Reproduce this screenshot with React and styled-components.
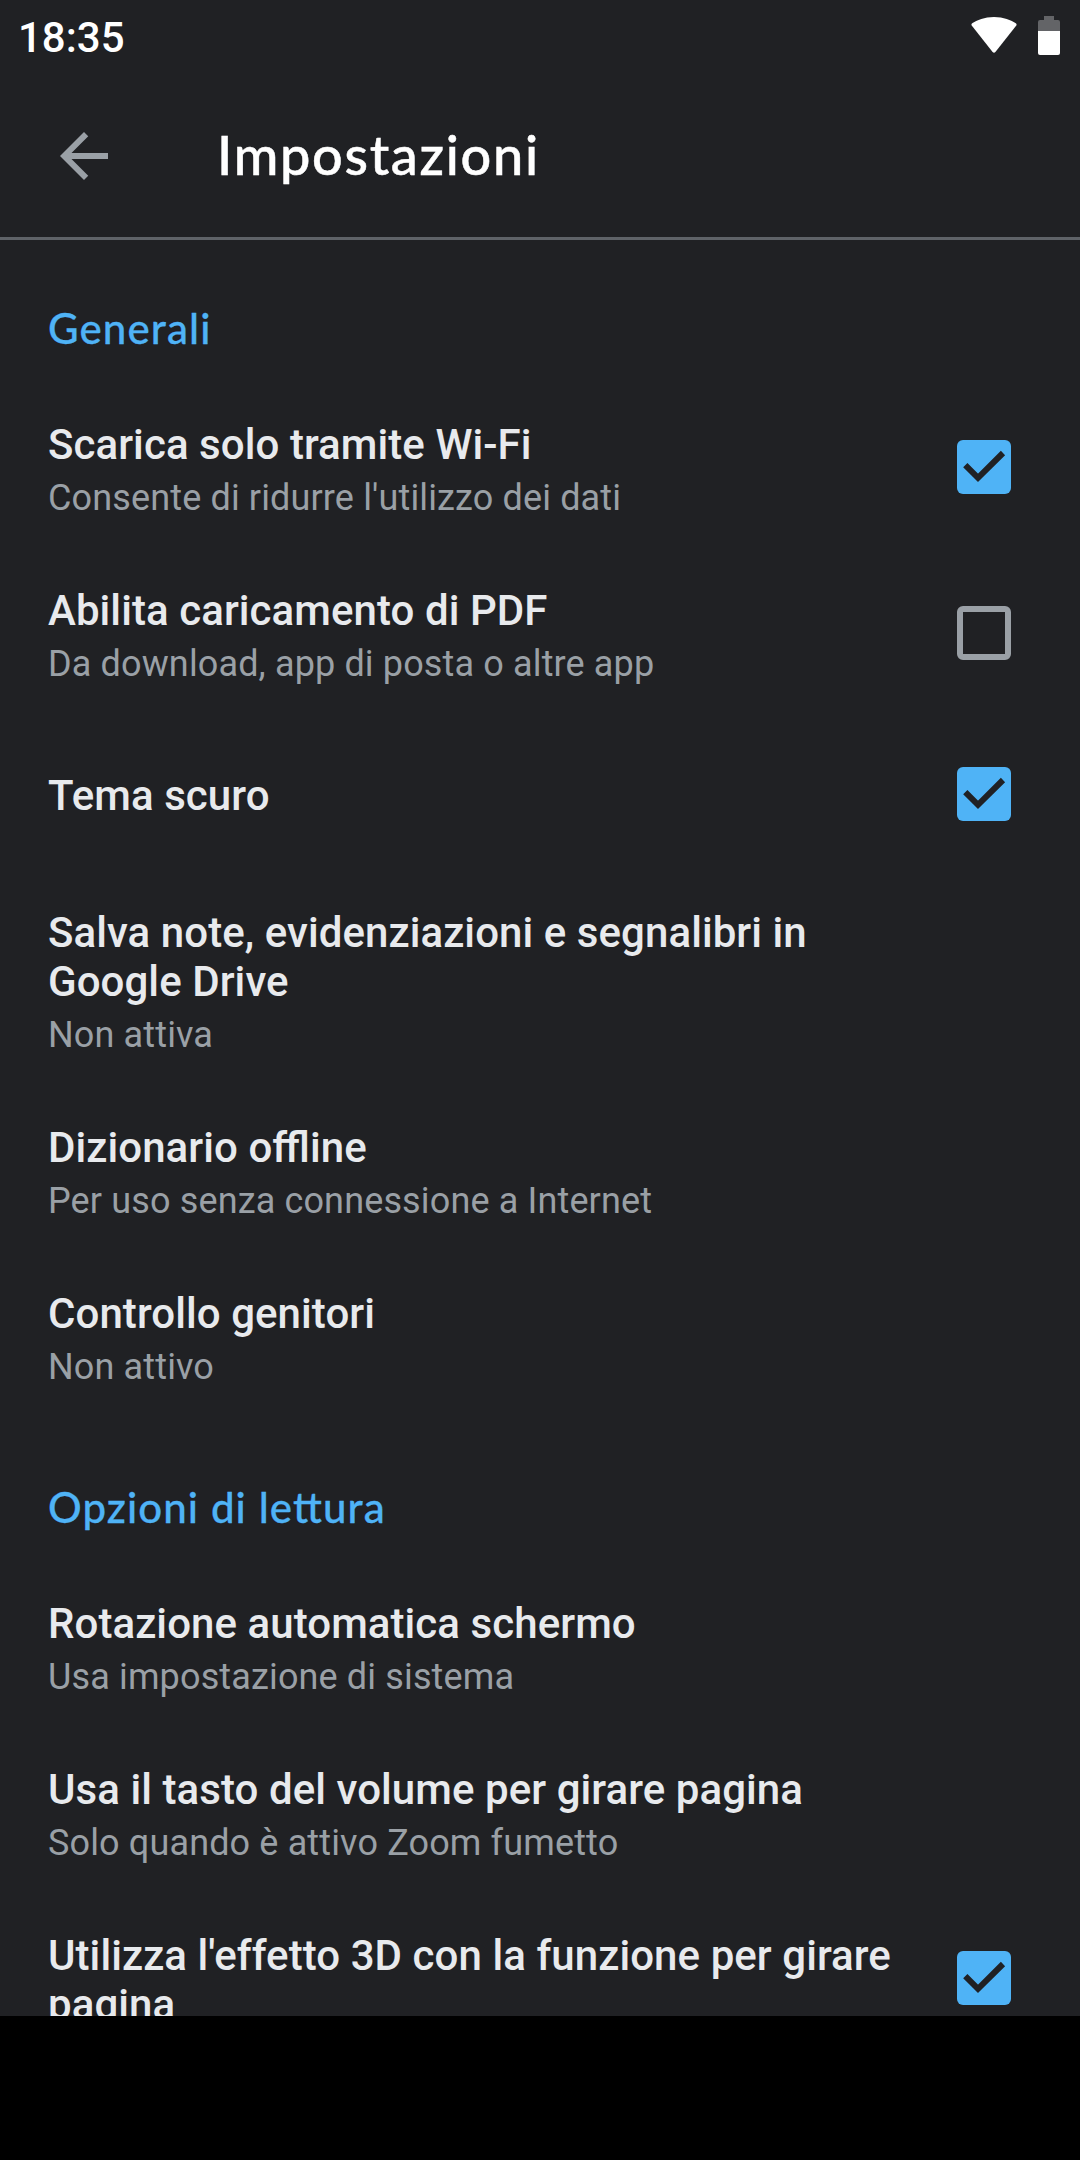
import React, { useState } from "react";
import styled, { createGlobalStyle, ThemeProvider } from "styled-components";

const theme = {
  background: "#202124",
  title: "#e8eaed",
  muted: "#9aa0a6",
  accent: "#4fb3f6",
  divider: "#5f6368"
};

const GlobalStyle = createGlobalStyle`
  html, body {
    margin: 0;
    padding: 0;
    background: #000;
  }
  body {
    font-family: Roboto, "Noto Sans", sans-serif;
    font-feature-settings: "liga" 1;
    overflow: hidden;
  }
`;

const Screen = styled.div`
  display: flex;
  flex-direction: column;
  width: 1080px;
  height: 2016px;
  overflow: hidden;
  background: ${props => props.theme.background};
`;

const StatusBar = styled.div`
  flex: none;
  display: flex;
  align-items: flex-start;
  justify-content: space-between;
  box-sizing: border-box;
  height: 72px;
  padding: 13px 20px 0 18px;
`;

const Clock = styled.time`
  color: #fff;
  font-size: 42px;
  font-weight: 500;
  line-height: 50px;
`;

const StatusIcons = styled.div`
  display: flex;
  gap: 21px;
  padding-top: 3px;
`;

const AppBar = styled.header`
  flex: none;
  display: flex;
  align-items: center;
  box-sizing: border-box;
  height: 168px;
  padding: 0 48px;
  border-bottom: 3px solid ${props => props.theme.divider};
`;

const BackButton = styled.button`
  display: flex;
  width: 72px;
  height: 72px;
  margin: 3px 97px 0 0;
  padding: 0;
  border: 0;
  background: none;
  color: ${props => props.theme.muted};
`;

const PageTitle = styled.h1`
  margin: 0;
  color: #fff;
  font-family: Lato, sans-serif;
  font-size: 54px;
  font-weight: 500;
  letter-spacing: 1.7px;
  line-height: 64px;
  -webkit-text-stroke: 0.5px currentColor;
`;

const Settings = styled.main`
  flex: 1;
  min-height: 0;
  padding-top: 2px;
  overflow: hidden;
`;

const SectionTitle = styled.h2`
  box-sizing: border-box;
  height: 144px;
  margin: 0;
  padding: 61px 48px 0;
  color: ${props => props.theme.accent};
  font-family: Lato, sans-serif;
  font-size: 42px;
  font-weight: 500;
  letter-spacing: 1.1px;
  line-height: 50px;
  -webkit-text-stroke: 0.3px currentColor;
`;

const Row = styled.div`
  display: flex;
  align-items: center;
  justify-content: space-between;
  box-sizing: border-box;
  min-height: 156px;
  padding: 34px 69px 33px 48px;
`;

const RowText = styled.div`
  width: 849px;
  min-height: 51px;
`;

const RowTitle = styled.div`
  color: ${props => props.theme.title};
  font-size: 42px;
  font-weight: 500;
  letter-spacing: 0.07px;
  line-height: 49px;
`;

const RowSummary = styled.div`
  margin-top: 8px;
  color: ${props => props.theme.muted};
  font-size: 36px;
  letter-spacing: 0.14px;
  line-height: 42px;
`;

const Box = styled.button`
  flex: none;
  display: flex;
  box-sizing: border-box;
  width: 54px;
  height: 54px;
  margin: 0 0 5px;
  padding: 0;
  border: ${props =>
    props.$checked ? "0" : `6px solid ${props.theme.muted}`};
  border-radius: 6px;
  background: ${props => (props.$checked ? props.theme.accent : "none")};
`;

const BackIcon = () => (
  <svg width="72" height="72" viewBox="0 0 24 24">
    <path
      d="M20 11H7.830l5.590-5.590L12 4l-8 8 8 8 1.410-1.410L7.830 13H20v-2z"
      fill="currentColor"
    />
  </svg>
);

const WifiIcon = () => (
  <svg width="46" height="39" viewBox="0 0 46 39">
    <path
      d="M23 1C13.500 1 6 4 .9 7.600Q0 8.500.7 9.500L21.600 36q1.400 1.500 2.800 0L45.300 9.500q.7-1-.2-1.900C40 4 32.500 1 23 1z"
      fill="#fff"
    />
  </svg>
);

const BatteryIcon = () => (
  <svg width="22" height="39" viewBox="0 0 22 39">
    <path
      d="M6 0h10v4h4q2 0 2 2v9H0V6q0-2 2-2h4z"
      fill="#636467"
    />
    <path d="M0 15h22v22q0 2-2 2H2q-2 0-2-2z" fill="#fff" />
  </svg>
);

const CheckIcon = () => (
  <svg width="54" height="54" viewBox="0 0 54 54">
    <path
      d="M8.300 25.100L21 37.800 46 13"
      fill="none"
      stroke="#202124"
      strokeWidth="6"
    />
  </svg>
);

const Checkbox = ({ label, initial }) => {
  const [checked, setChecked] = useState(initial);
  return (
    <Box
      role="checkbox"
      aria-checked={checked}
      aria-label={label}
      $checked={checked}
      onClick={() => setChecked(!checked)}
    >
      {checked && <CheckIcon />}
    </Box>
  );
};

const sections = [
  {
    title: "Generali",
    rows: [
      {
        title: "Scarica solo tramite Wi-Fi",
        summary: "Consente di ridurre l'utilizzo dei dati",
        checked: true
      },
      {
        title: "Abilita caricamento di PDF",
        summary: "Da download, app di posta o altre app",
        checked: false
      },
      { title: "Tema scuro", checked: true },
      {
        title: "Salva note, evidenziazioni e segnalibri in Google Drive",
        summary: "Non attiva"
      },
      {
        title: "Dizionario offline",
        summary: "Per uso senza connessione a Internet"
      },
      { title: "Controllo genitori", summary: "Non attivo" }
    ]
  },
  {
    title: "Opzioni di lettura",
    rows: [
      {
        title: "Rotazione automatica schermo",
        summary: "Usa impostazione di sistema"
      },
      {
        title: "Usa il tasto del volume per girare pagina",
        summary: "Solo quando è attivo Zoom fumetto"
      },
      {
        title: "Utilizza l'effetto 3D con la funzione per girare pagina",
        checked: true
      }
    ]
  }
];

const App = () => (
  <ThemeProvider theme={theme}>
    <GlobalStyle />
    <Screen>
      <StatusBar>
        <Clock>18:35</Clock>
        <StatusIcons>
          <WifiIcon />
          <BatteryIcon />
        </StatusIcons>
      </StatusBar>
      <AppBar>
        <BackButton aria-label="Indietro">
          <BackIcon />
        </BackButton>
        <PageTitle>Impostazioni</PageTitle>
      </AppBar>
      <Settings>
        {sections.map(section => (
          <section key={section.title}>
            <SectionTitle>{section.title}</SectionTitle>
            {section.rows.map(row => (
              <Row key={row.title}>
                <RowText>
                  <RowTitle>{row.title}</RowTitle>
                  {row.summary && <RowSummary>{row.summary}</RowSummary>}
                </RowText>
                {row.checked !== undefined && (
                  <Checkbox label={row.title} initial={row.checked} />
                )}
              </Row>
            ))}
          </section>
        ))}
      </Settings>
    </Screen>
  </ThemeProvider>
);

export default App;
